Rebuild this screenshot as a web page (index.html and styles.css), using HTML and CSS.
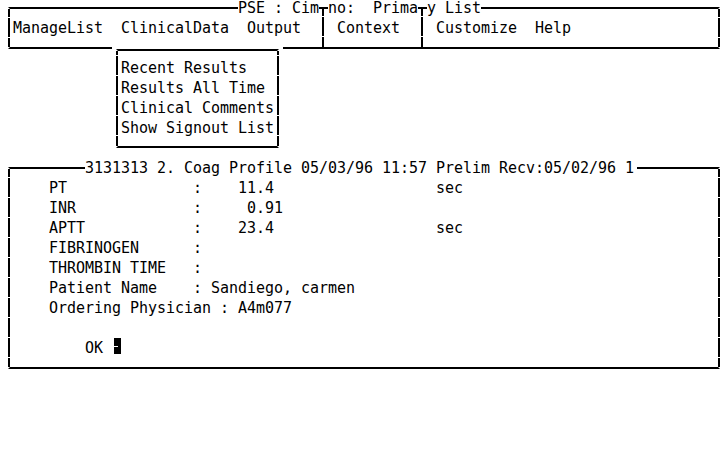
FILE: index.html
```html
<!DOCTYPE html>
<html>
<head>
<meta charset="utf-8">
<link rel="stylesheet" href="styles.css">
</head>
<body>
<div class="screen">
  <div class="box menubar">
    <span class="title t1">PSE : Cim</span>
    <span class="title t2">no:  Prima</span>
    <span class="title t3">y List</span>
    <div class="seg seg1">ManageList  ClinicalData  Output</div>
    <div class="divider"></div>
    <div class="seg seg2"> Context</div>
    <div class="divider"></div>
    <div class="seg seg3"> Customize  Help</div>
  </div>
  <div class="dropdown">
    <div class="dropdown-inner">
      <div class="row">Recent Results</div>
      <div class="row">Results All Time</div>
      <div class="row">Clinical Comments</div>
      <div class="row">Show Signout List</div>
    </div>
  </div>
  <div class="box results">
    <span class="title rtitle">3131313 2. Coag Profile 05/03/96 11:57 Prelim Recv:05/02/96 1</span>
    <div class="row">    PT              :    11.4                  sec</div>
    <div class="row">    INR             :     0.91</div>
    <div class="row">    APTT            :    23.4                  sec</div>
    <div class="row">    FIBRINOGEN      :</div>
    <div class="row">    THROMBIN TIME   :</div>
    <div class="row">    Patient Name    : Sandiego, carmen</div>
    <div class="row">    Ordering Physician : A4m077</div>
    <div class="row"> </div>
    <div class="row">        OK <span class="cursor"></span></div>
  </div>
</div>
</body>
</html>
```
FILE: styles.css
```css
html, body {
  margin: 0;
  background: #fff;
}
body {
  width: 728px;
  height: 456px;
  overflow: hidden;
  font-family: "DejaVu Sans Mono", monospace;
  font-size: 15px;
  line-height: 20px;
  letter-spacing: -0.03px;
  color: #000;
}
.screen {
  position: relative;
  padding-top: 7px;
}
/* box: horizontal edges as borders, vertical edges as dashed-per-row lines */
.box {
  position: relative;
  box-sizing: border-box;
  margin-left: 8px;
  width: 712px;
  border: 2px solid #000;
  border-left-color: transparent;
  border-right-color: transparent;
  background:
    linear-gradient(#000 0 19px, transparent 19px 20px) left 0 top 11px / 2px 20px repeat-y border-box,
    linear-gradient(#000 0 19px, transparent 19px 20px) right 0 top 11px / 2px 20px repeat-y border-box;
}
.menubar {
  height: 42px;
  display: flex;
  align-items: stretch;
  padding-left: 3px;
}
.seg {
  white-space: pre;
  padding-top: 9px;
}
.seg1 { width: 306px; }
.seg2 { width: 90px; }
.divider {
  width: 9px;
  margin: -2px 0;
  background: linear-gradient(#000 0 19px, transparent 19px 20px) 3px 10px / 2px 20px repeat-y;
}
.title {
  position: absolute;
  top: -8px;
  height: 14px;
  line-height: 14px;
  background: #fff;
  white-space: pre;
}
.t1 { left: 228px; }
.t2 { left: 318px; }
.t3 { left: 417px; }
.dropdown {
  position: absolute;
  left: 112px;
  top: 37px;
  width: 171px;
  height: 120px;
  background: #fff;
}
.dropdown-inner {
  box-sizing: border-box;
  margin: 12px 0 0 4px;
  width: 163px;
  height: 99px;
  border: 2px solid #000;
  border-left-color: transparent;
  border-right-color: transparent;
  padding: 7px 0 0 3px;
  background:
    linear-gradient(#000 0 19px, transparent 19px 20px) left 0 top 7px / 2px 20px repeat-y border-box,
    linear-gradient(#000 0 19px, transparent 19px 20px) right 0 top 7px / 2px 20px repeat-y border-box;
}
.results {
  margin-top: 118px;
  height: 202px;
  padding: 9px 0 0 3px;
}
.rtitle {
  left: 75px;
  padding-right: 3px;
}
.row {
  white-space: pre;
  height: 20px;
}
.cursor {
  display: inline-block;
  vertical-align: top;
  width: 7px;
  height: 16px;
  margin: 0 0 0 2px;
  background: linear-gradient(#fff, #fff) no-repeat 0 8px / 4px 1px, #000;
}
```
